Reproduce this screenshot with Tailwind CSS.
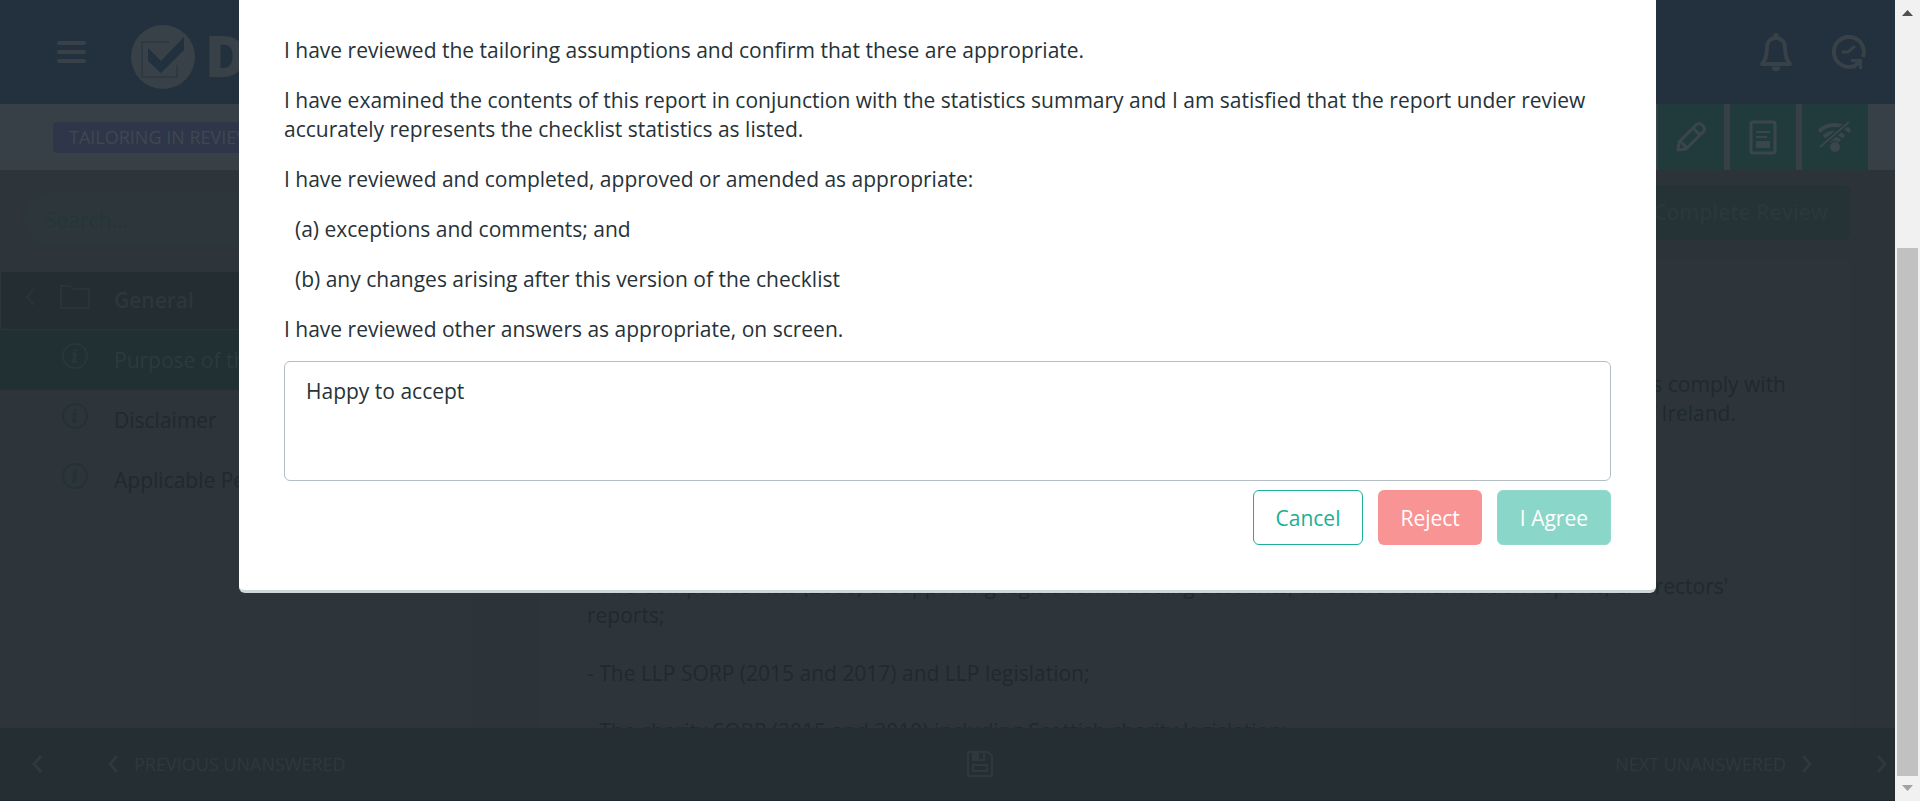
<!DOCTYPE html>
<html lang="en">
<head>
<meta charset="utf-8">
<title>Checklist review</title>
<script src="https://cdn.jsdelivr.net/npm/@tailwindcss/browser@4"></script>
</head>
<body class="flex h-screen overflow-hidden bg-[#2c343a] font-['Open_Sans',sans-serif] text-[21px] leading-[29px] text-[#1f2a2d]">
<div class="relative flex min-w-0 flex-1 flex-col overflow-hidden">
  <header class="flex h-[104px] shrink-0 items-center bg-[#23303d] pl-[57px] pr-[29px] text-[#374147]">
    <button aria-label="Menu" class="flex w-[29px] flex-col gap-[5px]"><span class="h-1 rounded bg-current"></span><span class="h-1 rounded bg-current"></span><span class="h-1 rounded bg-current"></span></button>
    <a href="#" class="ml-[45px] flex items-center gap-[10px] pt-[10px]">
      <svg class="size-16" viewBox="0 0 64 64"><circle cx="32" cy="32" r="32" fill="#374147"/><path d="M38 17H11v35h35V40" fill="none" stroke="#303941" stroke-width="2"/><path d="M17 23l13 13 23-24v13L30 48 17 36z" fill="#23303d"/></svg>
      <span class="pb-1 text-[57px] font-extrabold leading-[60px]">D</span>
    </a>
    <div class="ml-auto flex items-center gap-[39px]">
      <button aria-label="Notifications"><svg class="h-[38px] w-[34px]" viewBox="0 0 34 38" fill="none" stroke="currentColor" stroke-width="4" stroke-linejoin="round"><path d="M3 31c4-5 5-9 5-16 0-7 4-10 9-10s9 3 9 10c0 7 1 11 5 16z"/><path d="M13 34a4 4 0 0 0 8 0z" fill="currentColor" stroke-width="1"/><circle cx="17" cy="3" r="3" fill="currentColor" stroke="none"/></svg></button>
      <button aria-label="History"><svg class="size-[34px]" viewBox="0 0 34 34" fill="none" stroke="currentColor" stroke-width="4"><path d="M31 22A15 15 0 1 0 22 31"/><path d="M10 17h6l7-6" stroke-width="3"/><path d="M19 24h11v10h-3v-4l-5 4-3-3 5-4h-5z" fill="currentColor" stroke="none"/></svg></button>
    </div>
  </header>
  <div class="flex h-[66px] shrink-0 items-center bg-[#384047] pl-[53px] pr-[27px]">
    <span class="rounded bg-[#30364a] px-4 py-[1px] text-[18px] text-[#3f484f]">TAILORING IN REVIEW</span>
    <div class="ml-auto flex gap-[6px] text-[#3b464c]">
      <button aria-label="Edit" class="flex size-[66px] items-center justify-center bg-[#213a3c]"><svg class="size-[32px]" viewBox="0 0 32 32" fill="none" stroke="currentColor" stroke-width="3" stroke-linejoin="round"><path d="M3 29l1-8L21 4c2-2 4-2 6 0l1 1c2 2 2 4 0 6L11 28zM18 7l7 7M5 20l7 7"/></svg></button>
      <button aria-label="Report" class="flex size-[66px] items-center justify-center bg-[#213a3c]"><svg class="h-[35px] w-[28px]" viewBox="0 0 28 35" fill="none" stroke="currentColor" stroke-width="3"><rect x="2" y="2" width="24" height="31" rx="2"/><path d="M7 12h14M7 17h11" stroke-width="2"/><path d="M7 21h14v7H7z" fill="currentColor" stroke="none"/></svg></button>
      <button aria-label="Offline" class="flex size-[66px] items-center justify-center bg-[#213a3c]"><svg class="h-[32px] w-[36px]" viewBox="0 0 36 32" fill="none" stroke="currentColor" stroke-width="4"><path d="M2 10.500a22 22 0 0 1 31 0M7 16a14 14 0 0 1 20 0M12 20a8 8 0 0 1 11 0"/><path d="M2 27L32 1" stroke="#213a3c" stroke-width="5"/><path d="M3 26L32 1" stroke-width="2"/><circle cx="18" cy="26" r="5" fill="currentColor" stroke="none"/></svg></button>
    </div>
  </div>
  <div class="flex min-h-0 flex-1">
    <nav class="flex w-[473px] shrink-0 flex-col bg-[#2d353a]">
      <div class="px-[23px] pb-[24px] pt-[22px]"><input type="text" aria-label="Search" placeholder="Search..." class="block h-[55px] w-full rounded-full border border-[#29373a] bg-[#2d363b] px-[21px] placeholder:text-[#243636]"></div>
      <a href="#" class="flex h-[59px] items-center border border-[#2b353a] bg-[#242d32] pl-[24px] font-semibold text-[#2d373c]">
        <svg class="mb-2 h-[18px] w-[10px]" viewBox="0 0 10 18" fill="none" stroke="#29343a" stroke-width="2"><path d="M9 1L2 9l7 8"/></svg>
        <svg class="mb-2 ml-[25px] h-[26px] w-[30px]" viewBox="0 0 30 26" fill="none" stroke="#29343a" stroke-width="2"><path d="M1 24V2h9l4 3h15v19z"/></svg>
        <span class="ml-[24px]">General</span></a>
      <a href="#" class="flex h-[60px] items-center bg-[#203033] pl-[61px] font-medium text-[#2d3a3e]"><svg class="mb-2 size-[28px]" viewBox="0 0 28 28" fill="none" stroke="#28373b" stroke-width="2"><circle cx="14" cy="14" r="12"/><path d="M11.500 12h3l-2 7.500h3M14.500 7v2.500" stroke-width="3"/></svg><span class="ml-[25px]">Purpose of this checklist</span></a>
      <a href="#" class="flex h-[60px] items-center pl-[61px]"><svg class="mb-2 size-[28px]" viewBox="0 0 28 28" fill="none" stroke="#233236" stroke-width="2"><circle cx="14" cy="14" r="12"/><path d="M11.500 12h3l-2 7.500h3M14.500 7v2.500" stroke-width="3"/></svg><span class="ml-[25px]">Disclaimer</span></a>
      <a href="#" class="flex h-[60px] items-center pl-[61px]"><svg class="mb-2 size-[28px]" viewBox="0 0 28 28" fill="none" stroke="#233236" stroke-width="2"><circle cx="14" cy="14" r="12"/><path d="M11.500 12h3l-2 7.500h3M14.500 7v2.500" stroke-width="3"/></svg><span class="ml-[25px]">Applicable Periods</span></a>
    </nav>
    <main class="flex min-w-0 flex-1 flex-col pl-[67px] pr-[45px] pt-[15px]">
      <button class="h-[55px] self-end rounded-md bg-[#253236] px-[22px] font-semibold text-[#2b373b]">Complete Review</button>
      <section class="mt-[20px] min-h-0 flex-1 overflow-hidden whitespace-nowrap rounded-t bg-[#2d353a] px-[47px] pt-[110px]">
        <p class="pr-[17px] text-right">financial statements comply with</p>
        <p class="pr-[67px] text-right">Republic of Ireland.</p>
        <p class="mt-[144px]">- The Companies Acts (2006) &amp; supporting legislation including accounts, directors remuneration reports, &amp; directors'</p>
        <p>reports;</p>
        <p class="mt-[29px]">- The LLP SORP (2015 and 2017) and LLP legislation;</p>
        <p class="mt-[29px]">- The charity SORP (2015 and 2019) including Scottish charity legislation;</p>
      </section>
    </main>
  </div>
  <footer class="flex h-[73px] shrink-0 items-center border-b border-[#1e272b] bg-[#242e33] pl-[32px] pr-[8px] text-[18px] text-[#2e393e]">
    <div class="flex flex-1 items-center">
      <button aria-label="Previous"><svg class="h-[18px] w-[10px]" viewBox="0 0 10 18" fill="none" stroke="currentColor" stroke-width="3"><path d="M9 1L2 9l7 8"/></svg></button>
      <button class="ml-[66px] flex items-center gap-4"><svg class="h-[18px] w-[10px]" viewBox="0 0 10 18" fill="none" stroke="currentColor" stroke-width="3"><path d="M9 1L2 9l7 8"/></svg>PREVIOUS UNANSWERED</button>
    </div>
    <button aria-label="Save" class="ml-10"><svg class="size-[26px]" viewBox="0 0 26 26" fill="none" stroke="currentColor" stroke-width="2"><path d="M1 1h20l4 4v20H1zM6 1v8h11V1M6 14h14v6H6z"/><path d="M6 2h5v7H6z" fill="currentColor"/></svg></button>
    <div class="flex flex-1 items-center justify-end">
      <button class="flex items-center gap-4">NEXT UNANSWERED<svg class="h-[18px] w-[10px]" viewBox="0 0 10 18" fill="none" stroke="currentColor" stroke-width="3"><path d="M1 1l7 8-7 8"/></svg></button>
      <button aria-label="Next" class="ml-[65px]"><svg class="h-[18px] w-[10px]" viewBox="0 0 10 18" fill="none" stroke="currentColor" stroke-width="3"><path d="M1 1l7 8-7 8"/></svg></button>
    </div>
  </footer>

  <div class="absolute inset-x-0 top-0 flex justify-center px-[239px]">
    <div role="dialog" aria-label="Review sign-off" class="w-full rounded-b-md border-b-[3px] border-[#cfd6d9] bg-white px-[45px] pb-[45px] pt-[36px] text-[#263238]">
      <div class="flex flex-col gap-[21px]">
        <p>I have reviewed the tailoring assumptions and confirm that these are appropriate.</p>
        <p>I have examined the contents of this report in conjunction with the statistics summary and I am satisfied that the report under review accurately represents the checklist statistics as listed.</p>
        <p>I have reviewed and completed, approved or amended as appropriate:</p>
        <p class="pl-[11px]">(a) exceptions and comments; and</p>
        <p class="pl-[11px]">(b) any changes arising after this version of the checklist</p>
        <p>I have reviewed other answers as appropriate, on screen.</p>
      </div>
      <textarea aria-label="Comments" class="mt-[17px] block h-[120px] w-full resize-none rounded-md border border-[#b4bfc5] px-[21px] py-[15px]">Happy to accept</textarea>
      <div class="mt-[9px] flex justify-end gap-[15px] font-medium">
        <button class="h-[55px] rounded-md border border-[#1aaf96] px-[22px] pt-[2px] text-[#1aaf96]">Cancel</button>
        <button class="h-[55px] rounded-md bg-[#f99494] px-[22px] pt-[2px] text-white">Reject</button>
        <button class="h-[55px] rounded-md border border-[#93dacd] bg-[#8ad6c9] px-[22px] pt-[2px] text-white">I Agree</button>
      </div>
    </div>
  </div>
</div>
<div aria-hidden="true" class="flex w-[25px] shrink-0 flex-col items-center bg-[#f1f1f1]">
  <svg class="mt-[10px] h-[6px] w-[11px] shrink-0" viewBox="0 0 11 6"><path d="M0 6h11L5.500 0z" fill="#505050"/></svg>
  <div class="mt-[232px] w-[21px] flex-1 bg-[#c1c1c1]"></div>
  <svg class="mb-[10px] mt-[9px] h-[6px] w-[11px] shrink-0" viewBox="0 0 11 6"><path d="M0 0h11L5.500 6z" fill="#a3a3a3"/></svg>
</div>
</body>
</html>
